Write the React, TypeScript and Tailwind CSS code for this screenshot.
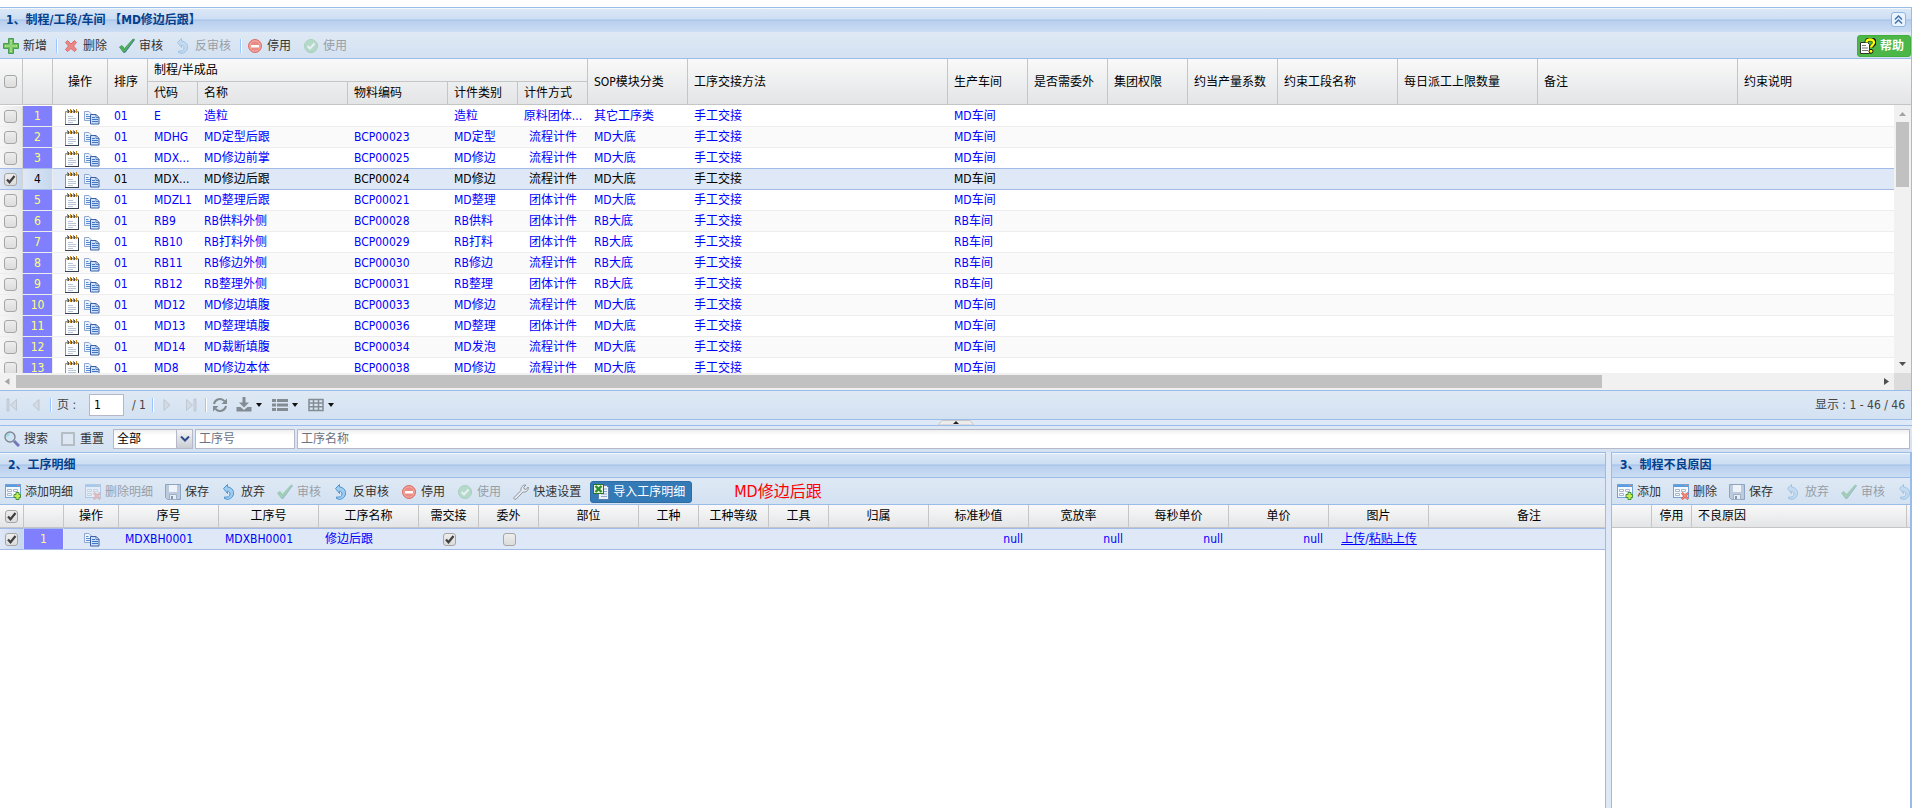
import type { ReactNode } from 'react'
import { clsx } from 'clsx'

type IconProps = { className?: string }

// ---- Icons ----

function Svg({ className, children }: { className?: string; children: ReactNode }) {
  return (
    <svg viewBox="0 0 16 16" className={clsx('w-4 h-4 shrink-0', className)} aria-hidden="true">
      {children}
    </svg>
  )
}

function PlusIcon() {
  return (
    <Svg>
      <path d="M5.5 0.5h5v5h5v5h-5v5h-5v-5h-5v-5h5z" fill="#6cbf5c" stroke="#4a9a58" />
      <path d="M8 2v12M2 8h12" stroke="#b9e58a" strokeWidth="2" />
      <path d="M8 3v10M3 8h10" stroke="#7cc96a" />
    </Svg>
  )
}

function CrossIcon() {
  return (
    <Svg>
      <path
        d="M2.5 4.5l2-2L8 6l3.500-3.500 2 2L10.500 8l3 3.500-2 2L8 10.500 4.500 13.500l-2-2L5.500 8z"
        fill="#ea8787"
        stroke="#dd6b6b"
      />
    </Svg>
  )
}

function CheckIcon() {
  return (
    <Svg>
      <path d="M0.500 9l2.500-1.500 2.500 3L14 1l1.500 0.500L6 14.500H4.500z" fill="#4cb05a" stroke="#3f9a55" strokeWidth="0.800" />
      <path d="M5 13.800h1.500L15.500 1.800" fill="none" stroke="#4d6fae" strokeWidth="0.800" />
    </Svg>
  )
}

function UndoIcon() {
  return (
    <Svg>
      <path
        d="M2.500 4.500L6.500 0.500v2.500c4 0.500 6.500 3 6 7-0.500 3-3 5-6 5.500l-3-1v-1.500c3.500 0.500 5.500-0.500 5.500-3 0-1.800-0.800-2.500-2.500-2.800v2.300z"
        fill="#9fcdf0"
        stroke="#4f94cf"
      />
    </Svg>
  )
}

function StopIcon() {
  return (
    <Svg>
      <circle cx="8" cy="8" r="6.500" fill="#ea8a83" stroke="#dd7169" />
      <circle cx="8" cy="8" r="5.200" fill="none" stroke="#f3aca6" />
      <rect x="4" y="7" width="8" height="2.500" fill="#fff" />
    </Svg>
  )
}

function EnableIcon() {
  return (
    <Svg>
      <circle cx="8" cy="8" r="6.500" fill="#7fc98a" stroke="#5fb16c" />
      <path d="M4.500 8l2.500 2.500 4.500-5" fill="none" stroke="#fff" strokeWidth="2" />
    </Svg>
  )
}

function FormIcon({ remove }: { remove?: boolean }) {
  return (
    <Svg>
      <rect x="0.500" y="0.500" width="15" height="13" fill="#f4f9ff" stroke="#6fa3d8" />
      <path d="M1 1h14v2H1z" fill="#5b9be0" />
      <path d="M12 1h2v1h-2z" fill="#f08070" />
      <path d="M2.500 5.500h4v2h-4zM2.500 9.500h4v2h-4zM8.500 5.500h4v2h-4z" fill="#fff" stroke="#a6b6ca" />
      {remove ? (
        <path d="M8.500 9.500l1-1 2.500 2 2.500-2 1 1-2 2.500 2 2.500-1 1-2.500-2-2.500 2-1-1 2-2.500z" fill="#f08d80" stroke="#d2523f" strokeWidth="0.800" />
      ) : (
        <path d="M11 8.500h3v2h1.500v3H14v2h-3v-2H9v-3h2z" fill="#c4ea50" stroke="#3f9340" />
      )}
    </Svg>
  )
}

function SaveIcon() {
  return (
    <Svg>
      <path d="M0.500 0.500h15v15h-13l-2-2z" fill="#bccadd" stroke="#8fa4c0" />
      <path d="M4 1h8v7H4z" fill="#eef3fa" />
      <path d="M4.500 10.500h7v5h-7z" fill="#e8edf4" stroke="#9fb0c6" />
      <path d="M6 12h2v3H6z" fill="#8296b3" />
    </Svg>
  )
}

function WrenchIcon() {
  return (
    <Svg>
      <path
        d="M1 13.500L8 6.500C7.500 3.500 9.500 0.800 13 1l-2.300 2.300 0.500 1.700 1.700 0.500L15.200 3c0.500 3.500-2 5.500-5.200 5L3 15.200c-1.300 0.600-2.600-0.500-2-1.700z"
        fill="#e8ebf0"
        stroke="#8d949e"
      />
    </Svg>
  )
}

function ExcelIcon() {
  return (
    <Svg>
      <path d="M5.500 1.500h8l2 2v12h-10z" fill="#e9f0fa" stroke="#5c7cab" />
      <path d="M11 5h3M11 7.500h3M8 10h6M8 12.500h6" stroke="#8aa6cf" />
      <rect x="0.500" y="0.500" width="10" height="9" fill="#e6f3e0" stroke="#2b7424" />
      <path d="M2.500 2l6 6M8.500 2l-6 6" stroke="#2f8a28" strokeWidth="2.400" />
    </Svg>
  )
}

function HelpIcon() {
  return (
    <Svg>
      <path d="M0.500 4.500h7l2 2v9h-9z" fill="#fff" stroke="#333" />
      <path d="M2 7.500h4M2 10h6M2 12.500h6" stroke="#777" />
      <path d="M6.500 4.500C6.500 0 14.500 0 14.500 4.500c0 2.500-3 2.500-3.300 5" fill="none" stroke="#111" strokeWidth="4" />
      <path d="M6.500 4.500C6.500 0.500 14 0.500 14 4.500c0 2.200-2.800 2.500-3 5" fill="none" stroke="#ff0" strokeWidth="2.400" />
      <circle cx="11" cy="13.300" r="2" fill="#ff0" stroke="#111" />
    </Svg>
  )
}

function NoteIcon() {
  return (
    <Svg>
      <path d="M1.500 2.500h13v13h-13z" fill="#fdfdfd" stroke="#8a929c" />
      <path d="M1 15.500h14M14.500 3v13" stroke="#36424f" />
      <path d="M2 3.500h12" stroke="#efe3c4" />
      <path d="M3.500 0v4M6.500 0v4M9.500 0v4M12.500 0v4" stroke="#c98a1c" />
      <path d="M4.500 1v3M7.500 1v3M10.500 1v3" stroke="#5b5140" />
      <path d="M4 7.500h5M4 9.500h8M4 11.500h8M4 13.500h5" stroke="#b9c6d6" />
    </Svg>
  )
}

function CopyIcon() {
  return (
    <Svg>
      <path d="M0.500 2.500h4.500l3 3v6h-7.500z" fill="#eef4fc" stroke="#90a8cf" />
      <path d="M2 5.500h2.500M2 7.500h4M2 9.500h4" stroke="#5d8bd0" />
      <path d="M6.500 5.500h5.500l3 3v6.500h-8.500z" fill="#cfe1f8" stroke="#3a61a8" />
      <path d="M8 8.500h3M8 10.500h6M8 12.500h6" stroke="#3f74c6" />
      <path d="M12 5.500v3h3z" fill="#fff" stroke="#3a61a8" strokeWidth="0.800" />
    </Svg>
  )
}

function SearchIcon() {
  return (
    <Svg>
      <path d="M10 10l5 5" stroke="#7476b8" strokeWidth="3" />
      <circle cx="6" cy="6" r="5" fill="#cfe3f2" stroke="#7f8791" strokeWidth="1.400" />
      <path d="M3.500 5.500c0-1.500 1-2.500 2.500-2.500" fill="none" stroke="#7fe0f0" strokeWidth="1.500" />
    </Svg>
  )
}

function PageFirstIcon({ className }: IconProps) {
  return (
    <Svg className={className}>
      <path d="M3 2h2v12H3zM12.500 2.500v11L6.500 8z" fill="#d3dae3" stroke="#b7c0cc" strokeWidth="0.800" />
    </Svg>
  )
}

function PagePrevIcon({ className }: IconProps) {
  return (
    <Svg className={className}>
      <path d="M11 2.500v11L5 8z" fill="#d3dae3" stroke="#b7c0cc" strokeWidth="0.800" />
    </Svg>
  )
}

function RefreshIcon() {
  return (
    <Svg>
      <path d="M2 7a6 6 0 0 1 10.500-2.800M14 9a6 6 0 0 1-10.500 2.800" fill="none" stroke="#848c93" strokeWidth="2" />
      <path d="M15 1.500v5.500H9.500zM1 14.500V9h5.500z" fill="#848c93" />
    </Svg>
  )
}

function DownloadIcon() {
  return (
    <Svg>
      <path d="M6.500 0h3v5.500H13L8 10.500 3 5.500h3.500z" fill="#848c93" />
      <path d="M0.500 10h4L8 13l3.500-3h4v4.500h-15z" fill="#848c93" />
    </Svg>
  )
}

function ListIcon() {
  return (
    <Svg>
      <path d="M0 2h4v3H0zM5 2h11v3H5zM0 6.500h4v3H0zM5 6.500h11v3H5zM0 11h4v3H0zM5 11h11v3H5z" fill="#848c93" />
    </Svg>
  )
}

function GridIcon() {
  return (
    <Svg>
      <path d="M1 2.500h14v11H1zM1 6h14M1 9.700h14M5.500 3v10.500M10.500 3v10.500" fill="none" stroke="#848c93" strokeWidth="1.500" />
    </Svg>
  )
}

// ---- Shared controls ----

function Checkbox({ label, checked }: { label: string; checked?: boolean }) {
  return (
    <span className="relative inline-block w-[13px] h-[13px] align-middle">
      <input
        type="checkbox"
        aria-label={label}
        defaultChecked={checked}
        className="peer block w-[13px] h-[13px] appearance-none rounded-[3px] border border-[#a6a6a6] bg-linear-to-b from-[#ededed] to-[#dcdcdc]"
      />
      <svg viewBox="0 0 13 13" className="absolute inset-0 hidden pointer-events-none peer-checked:block" aria-hidden="true">
        <path d="M3 6.500l2.500 2.800L10.500 3" fill="none" stroke="#404040" strokeWidth="2.200" />
      </svg>
    </span>
  )
}

function ToolButton({ icon, label, disabled }: { icon: ReactNode; label: string; disabled?: boolean }) {
  return (
    <button
      disabled={disabled}
      className="flex shrink-0 items-center gap-1 h-[22px] px-[3px] whitespace-nowrap text-[#333] disabled:opacity-40"
    >
      {icon}
      {label}
    </button>
  )
}

function Separator({ className }: IconProps) {
  return <div className={clsx('shrink-0 w-0.5 h-3.5 border-l border-l-[#98c8ff] border-r border-r-white', className)} />
}

function Caret() {
  return (
    <svg viewBox="0 0 6 4" className="w-1.5 h-1" aria-hidden="true">
      <path d="M0 0h6L3 4z" fill="#111" />
    </svg>
  )
}

const titleBar =
  'flex items-center justify-between h-6 px-1.5 pb-0.5 border-t border-t-[#f3f8fd] font-bold text-[#04408c] bg-[linear-gradient(#dae7f6,#cddef3_45%,#abc7ec_46%,#abc7ec_50%,#b8cfee_51%,#cbddf3)]'
const toolbar = 'flex items-center gap-1.5 pt-px bg-linear-to-b from-[#dfe9f5] to-[#d3e1f1]'
const headerBg = 'bg-linear-to-b from-[#f9f9f9] to-[#e3e4e6]'
const textInput =
  'h-5 px-[3px] border border-[#b5b8c8] bg-white bg-linear-to-b from-[#eeefee] to-white to-30% text-black placeholder:text-gray-500 outline-none'

// ---- Process grid ----

const processCols = [
  'w-[23px]',
  'w-[30px]',
  'w-[55px]',
  'w-[40px]',
  'w-[50px]',
  'w-[150px]',
  'w-[100px]',
  'w-[70px]',
  'w-[70px]',
  'w-[100px]',
  'w-[260px]',
  'w-[80px]',
  'w-[80px]',
  'w-[80px]',
  'w-[90px]',
  'w-[120px]',
  'w-[140px]',
  'w-[200px]',
  '',
]

// code, name, material no., piece type, piece mode, SOP category, workshop
const processRows = [
  ['E', '造粒', '', '造粒', '原料团体...', '其它工序类', 'MD车间'],
  ['MDHG', 'MD定型后跟', 'BCP00023', 'MD定型', '流程计件', 'MD大底', 'MD车间'],
  ['MDX...', 'MD修边前掌', 'BCP00025', 'MD修边', '流程计件', 'MD大底', 'MD车间'],
  ['MDX...', 'MD修边后跟', 'BCP00024', 'MD修边', '流程计件', 'MD大底', 'MD车间'],
  ['MDZL1', 'MD整理后跟', 'BCP00021', 'MD整理', '团体计件', 'MD大底', 'MD车间'],
  ['RB9', 'RB供料外侧', 'BCP00028', 'RB供料', '团体计件', 'RB大底', 'RB车间'],
  ['RB10', 'RB打料外侧', 'BCP00029', 'RB打料', '团体计件', 'RB大底', 'RB车间'],
  ['RB11', 'RB修边外侧', 'BCP00030', 'RB修边', '流程计件', 'RB大底', 'RB车间'],
  ['RB12', 'RB整理外侧', 'BCP00031', 'RB整理', '团体计件', 'RB大底', 'RB车间'],
  ['MD12', 'MD修边填腹', 'BCP00033', 'MD修边', '流程计件', 'MD大底', 'MD车间'],
  ['MD13', 'MD整理填腹', 'BCP00036', 'MD整理', '团体计件', 'MD大底', 'MD车间'],
  ['MD14', 'MD裁断填腹', 'BCP00034', 'MD发泡', '流程计件', 'MD大底', 'MD车间'],
  ['MD8', 'MD修边本体', 'BCP00038', 'MD修边', '流程计件', 'MD大底', 'MD车间'],
]
const selectedRow = 3

function ColGroup({ cols }: { cols: string[] }) {
  return (
    <colgroup>
      {cols.map((width, i) => (
        <col key={i} className={width} />
      ))}
    </colgroup>
  )
}

function ProcessHeader() {
  const th = 'px-1.5 border-r border-b border-[#c5c5c5] text-left font-normal whitespace-nowrap'
  return (
    <table className={clsx('w-full table-fixed border-separate border-spacing-0 text-black', headerBg)}>
      <ColGroup cols={processCols} />
      <thead>
        <tr className="h-[23px]">
          <th rowSpan={2} className="pl-1 border-r border-b border-[#c5c5c5] text-left leading-3">
            <Checkbox label="全选" />
          </th>
          <th rowSpan={2} className={th} />
          <th rowSpan={2} className="border-r border-b border-[#c5c5c5] text-center font-normal">操作</th>
          <th rowSpan={2} className={th}>排序</th>
          <th colSpan={5} className={th}>制程/半成品</th>
          {['SOP模块分类', '工序交接方法', '生产车间', '是否需委外', '集团权限', '约当产量系数', '约束工段名称', '每日派工上限数量', '备注'].map(
            label => (
              <th key={label} rowSpan={2} className={th}>
                {label}
              </th>
            )
          )}
          <th rowSpan={2} className="px-1.5 border-b border-[#c5c5c5] text-left font-normal">约束说明</th>
        </tr>
        <tr className="h-[23px]">
          {['代码', '名称', '物料编码', '计件类别', '计件方式'].map(label => (
            <th key={label} className={th}>
              {label}
            </th>
          ))}
        </tr>
      </thead>
    </table>
  )
}

function ProcessBody() {
  return (
    <table className="w-full table-fixed border-separate border-spacing-0">
      <ColGroup cols={processCols} />
      <tbody>
        {processRows.map(([code, name, material, type, mode, sop, workshop], i) => {
          const selected = i === selectedRow
          const line = selected || i === selectedRow - 1 ? 'border-b-[#a3bae9]' : 'border-b-[#ededed]'
          const td = clsx('h-[21px] px-1.5 border-b whitespace-nowrap', line)
          return (
            <tr
              key={name}
              className={clsx(
                selected ? 'bg-[#dfe8f6] text-black' : 'text-[#0000ff]',
                !selected && i % 2 === 1 && 'bg-[#fafafa]'
              )}
            >
              <td
                className={clsx(
                  'h-[21px] pl-1 border-b border-r border-r-[#d4d4d4] bg-linear-to-r leading-3',
                  line,
                  selected ? 'from-[#dfe8f6] to-[#c6d8ee]' : 'from-[#f6f6f6] to-[#e9e9e9]'
                )}
              >
                <Checkbox label={name} checked={selected} />
              </td>
              <td
                className={clsx(
                  'border-b border-r border-r-[#ededed] text-center',
                  line,
                  selected ? 'bg-linear-to-r from-[#dfe8f6] to-[#c6d8ee]' : 'bg-[#8080ff] bg-clip-padding text-[#ffff80]'
                )}
              >
                {i + 1}
              </td>
              <td className={clsx('pl-0.5 border-b', line)}>
                <div className="flex justify-center gap-1 pt-px">
                  <button aria-label="编辑">
                    <NoteIcon />
                  </button>
                  <button aria-label="复制">
                    <CopyIcon />
                  </button>
                </div>
              </td>
              <td className={td}>01</td>
              <td className={td}>{code}</td>
              <td className={td}>{name}</td>
              <td className={td}>{material}</td>
              <td className={td}>{type}</td>
              <td className={clsx('border-b text-center whitespace-nowrap', line)}>{mode}</td>
              <td className={td}>{sop}</td>
              <td className={td}>手工交接</td>
              <td className={td}>{workshop}</td>
              <td colSpan={7} className={td} />
            </tr>
          )
        })}
      </tbody>
    </table>
  )
}

function ProcessPanel() {
  return (
    <section className="border-t border-r border-b border-[#99bce8]">
      <header className={titleBar}>
        <h2>1、制程/工段/车间 【MD修边后跟】</h2>
        <button aria-label="收起" className="flex items-center justify-center w-[15px] h-[15px] -mr-px rounded-[3px] border border-[#8fb5e3] bg-[#eaf4fe]">
          <svg viewBox="0 0 9 9" className="w-[9px] h-[9px]" aria-hidden="true">
            <path d="M1 4.500L4.500 1 8 4.500M1 8.500L4.500 5 8 8.500" fill="none" stroke="#3d74b0" strokeWidth="1.500" />
          </svg>
        </button>
      </header>
      <div className={clsx(toolbar, 'h-[27px] border-b border-[#99bce8]')}>
        <ToolButton icon={<PlusIcon />} label="新增" />
        <Separator className="-mr-1" />
        <ToolButton icon={<CrossIcon />} label="删除" />
        <ToolButton icon={<CheckIcon />} label="审核" />
        <ToolButton icon={<UndoIcon />} label="反审核" disabled />
        <Separator className="-mr-1" />
        <ToolButton icon={<StopIcon />} label="停用" />
        <ToolButton icon={<EnableIcon />} label="使用" disabled />
        <button className="flex items-center gap-1 h-[22px] ml-auto pl-0.5 pr-1.5 rounded-[3px] border border-[#3fae3b] bg-[#4cb748] font-bold text-white">
          <HelpIcon />
          帮助
        </button>
      </div>
      <ProcessHeader />
      <div className="flex h-[268px]">
        <div className="flex-1 min-w-0 pt-px overflow-hidden bg-white">
          <ProcessBody />
        </div>
        <div className="flex flex-col items-center w-[17px] bg-[#f1f1f1]">
          <svg viewBox="0 0 17 17" className="w-[17px] h-[17px] shrink-0" aria-hidden="true">
            <path d="M5 11h7L8.500 7z" fill="#a3a3a3" />
          </svg>
          <div className="w-[13px] h-[65px] bg-[#c1c1c1]" />
          <svg viewBox="0 0 17 17" className="w-[17px] h-[17px] shrink-0 mt-auto" aria-hidden="true">
            <path d="M5 6h7l-3.500 4z" fill="#505050" />
          </svg>
        </div>
      </div>
      <div className="flex items-center h-[17px] bg-[#f1f1f1]">
        <svg viewBox="0 0 17 17" className="w-4 h-[17px] shrink-0" aria-hidden="true">
          <path d="M10 5v7L5 8.500z" fill="#a3a3a3" />
        </svg>
        <div className="flex-1">
          <div className="w-[85.2%] h-[13px] bg-[#c1c1c1]" />
        </div>
        <svg viewBox="0 0 17 17" className="w-[17px] h-[17px] shrink-0" aria-hidden="true">
          <path d="M7 5v7l5-3.500z" fill="#505050" />
        </svg>
        <div className="w-[17px] h-[17px] bg-[#dcdcdc]" />
      </div>
      <PagingBar />
    </section>
  )
}

function PagingBar() {
  const separator = 'ml-1.5 mr-[5px]'
  return (
    <div className="flex items-center h-[29px] border-t border-[#99bce8] bg-linear-to-b from-[#dfe9f5] to-[#d3e1f1] text-[#444]">
      <div className="flex items-center gap-2 pl-1">
        <button aria-label="首页" disabled>
          <PageFirstIcon />
        </button>
        <button aria-label="上一页" disabled>
          <PagePrevIcon />
        </button>
      </div>
      <Separator className={separator} />
      <label htmlFor="page" className="w-8">页 :</label>
      <input
        id="page"
        defaultValue="1"
        className="w-[35px] h-[22px] px-1 border border-[#b5b8c8] bg-white text-xs text-black outline-none"
      />
      <span className="pl-2">/ 1</span>
      <Separator className={separator} />
      <div className="flex items-center gap-2">
        <button aria-label="下一页" disabled>
          <PagePrevIcon className="rotate-180" />
        </button>
        <button aria-label="末页" disabled>
          <PageFirstIcon className="rotate-180" />
        </button>
      </div>
      <Separator className={separator} />
      <button aria-label="刷新">
        <RefreshIcon />
      </button>
      <div className="flex items-center gap-2.5 pl-2">
        <button aria-label="导出" className="flex items-center gap-1">
          <DownloadIcon />
          <Caret />
        </button>
        <button aria-label="列表" className="flex items-center gap-1">
          <ListIcon />
          <Caret />
        </button>
        <button aria-label="表格" className="flex items-center gap-1">
          <GridIcon />
          <Caret />
        </button>
      </div>
      <span className="ml-auto pr-1.5">显示 : 1 - 46 / 46</span>
    </div>
  )
}

function SearchBar() {
  return (
    <div className="flex items-center h-[26px] pl-1 pr-0.5 bg-linear-to-b from-[#dfe9f5] to-[#d3e1f1] text-[#333]">
      <button className="flex items-center gap-1">
        <SearchIcon />
        搜索
      </button>
      <button className="flex items-center gap-[5px] ml-[13px]">
        <span className="w-3.5 h-3.5 border-2 border-[#b4bcc4] bg-[#dce7f3]" />
        重置
      </button>
      <div className="relative w-20 ml-[9px]">
        <select aria-label="状态" className={clsx(textInput, 'block w-full appearance-none')}>
          <option>全部</option>
        </select>
        <span className="absolute top-0 right-0 flex items-center justify-center w-[17px] h-5 border border-[#b5b8c8] bg-linear-to-b from-[#f4f4f4] to-[#c9cdd3] pointer-events-none">
          <svg viewBox="0 0 10 6" className="w-2.5 h-1.5" aria-hidden="true">
            <path d="M1 0.500l4 4 4-4" fill="none" stroke="#2d4a8a" strokeWidth="2" />
          </svg>
        </span>
      </div>
      <input aria-label="工序号" placeholder="工序号" className={clsx(textInput, 'w-[100px] ml-0.5')} />
      <input aria-label="工序名称" placeholder="工序名称" className={clsx(textInput, 'flex-1 min-w-0 ml-0.5')} />
    </div>
  )
}

// ---- Step detail grid ----

const detailCols = [
  { label: '序号', width: 'w-[100px]' },
  { label: '工序号', width: 'w-[100px]' },
  { label: '工序名称', width: 'w-[100px]' },
  { label: '需交接', width: 'w-[60px]' },
  { label: '委外', width: 'w-[60px]' },
  { label: '部位', width: 'w-[100px]' },
  { label: '工种', width: 'w-[60px]' },
  { label: '工种等级', width: 'w-[70px]' },
  { label: '工具', width: 'w-[60px]' },
  { label: '归属', width: 'w-[100px]' },
  { label: '标准秒值', width: 'w-[100px]' },
  { label: '宽放率', width: 'w-[100px]' },
  { label: '每秒单价', width: 'w-[100px]' },
  { label: '单价', width: 'w-[100px]' },
  { label: '图片', width: 'w-[100px]' },
]

function DetailGrid() {
  const th = 'h-[23px] border-r border-b border-[#c5c5c5] text-center font-normal whitespace-nowrap'
  const td = 'h-[22px] px-1.5 border-t border-b border-[#a3bae9] whitespace-nowrap'
  return (
    <table className="w-full table-fixed border-separate border-spacing-0">
      <ColGroup cols={['w-[24px]', 'w-[40px]', 'w-[55px]', ...detailCols.map(c => c.width), '']} />
      <thead className={clsx('text-black', headerBg)}>
        <tr>
          <th className={clsx(th, 'leading-3')}>
            <Checkbox label="全选" checked />
          </th>
          <th className={th} />
          <th className={th}>操作</th>
          {detailCols.map(col => (
            <th key={col.label} className={th}>
              {col.label}
            </th>
          ))}
          <th className="pl-6 border-b border-[#c5c5c5] text-center font-normal">备注</th>
        </tr>
      </thead>
      <tbody>
        <tr className="bg-[#dfe8f6] text-[#0000ff]">
          <td className="border-t border-b border-r border-[#a3bae9] border-r-[#d4dbe8] bg-linear-to-r from-[#dfe8f6] to-[#c6d8ee] text-center leading-3">
            <Checkbox label="修边后跟" checked />
          </td>
          <td className="border-t border-b border-r border-[#a3bae9] border-r-[#ededed] bg-[#8080ff] text-center text-[#ffff80]">1</td>
          <td className={td}>
            <button aria-label="复制" className="block mx-auto">
              <CopyIcon />
            </button>
          </td>
          <td className={td}>MDXBH0001</td>
          <td className={td}>MDXBH0001</td>
          <td className={td}>修边后跟</td>
          <td className={clsx(td, 'text-center leading-3')}>
            <Checkbox label="需交接" checked />
          </td>
          <td className={clsx(td, 'text-center leading-3')}>
            <Checkbox label="委外" />
          </td>
          <td className={td} />
          <td className={td} />
          <td className={td} />
          <td className={td} />
          <td className={td} />
          <td className={clsx(td, 'text-right')}>null</td>
          <td className={clsx(td, 'text-right')}>null</td>
          <td className={clsx(td, 'text-right')}>null</td>
          <td className={clsx(td, 'text-right')}>null</td>
          <td className={clsx(td, 'text-center')}>
            <a href="#upload" className="underline">上传</a>/<a href="#paste" className="underline">粘贴上传</a>
          </td>
          <td className={td} />
        </tr>
      </tbody>
    </table>
  )
}

function DetailPanel() {
  return (
    <section className="flex-1 min-w-0 border-t border-r border-[#99bce8] bg-white">
      <header className={clsx(titleBar, 'pl-2')}>
        <h2>2、工序明细</h2>
      </header>
      <div className={clsx(toolbar, 'h-7 pl-0.5 border-t border-b border-[#99bce8]')}>
        <ToolButton icon={<FormIcon />} label="添加明细" />
        <ToolButton icon={<FormIcon remove />} label="删除明细" disabled />
        <ToolButton icon={<SaveIcon />} label="保存" />
        <ToolButton icon={<UndoIcon />} label="放弃" />
        <ToolButton icon={<CheckIcon />} label="审核" disabled />
        <ToolButton icon={<UndoIcon />} label="反审核" />
        <ToolButton icon={<StopIcon />} label="停用" />
        <ToolButton icon={<EnableIcon />} label="使用" disabled />
        <ToolButton icon={<WrenchIcon />} label="快速设置" />
        <button className="flex shrink-0 items-center gap-1 h-[22px] pl-0.5 pr-1.5 rounded-[3px] border border-[#2e6da4] bg-[#337ab7] text-white">
          <ExcelIcon />
          导入工序明细
        </button>
        <span className="pl-9 text-base leading-5 text-[#ff0000] whitespace-nowrap">MD修边后跟</span>
      </div>
      <DetailGrid />
    </section>
  )
}

function ReasonPanel() {
  const th = 'h-[23px] border-r border-b border-[#c5c5c5] font-normal'
  return (
    <section className="w-[301px] border-t border-l border-r-2 border-[#99bce8] bg-white overflow-hidden">
      <header className={clsx(titleBar, 'pl-2')}>
        <h2>3、制程不良原因</h2>
      </header>
      <div className={clsx(toolbar, 'h-7 pl-0.5 border-t border-b border-[#99bce8] overflow-hidden')}>
        <ToolButton icon={<FormIcon />} label="添加" />
        <ToolButton icon={<FormIcon remove />} label="删除" />
        <ToolButton icon={<SaveIcon />} label="保存" />
        <ToolButton icon={<UndoIcon />} label="放弃" disabled />
        <ToolButton icon={<CheckIcon />} label="审核" disabled />
        <ToolButton icon={<UndoIcon />} label="" disabled />
      </div>
      <table className="w-full table-fixed border-separate border-spacing-0">
        <ColGroup cols={['w-[40px]', 'w-[40px]', '', 'w-[3px]']} />
        <thead className={clsx('text-black', headerBg)}>
          <tr>
            <th className={th} />
            <th className={th}>停用</th>
            <th className={clsx(th, 'px-1.5 text-left')}>不良原因</th>
            <th className="border-b border-[#c5c5c5]" />
          </tr>
        </thead>
      </table>
    </section>
  )
}

export default function App() {
  return (
    <div className="flex flex-col min-h-screen pt-[7px] overflow-hidden bg-white text-xs leading-4 font-['DejaVu_Sans_Condensed','Noto_Sans_CJK_SC',sans-serif]">
      <ProcessPanel />
      {/* Splitter with its collapse handle */}
      <div className="flex justify-center h-[5px] bg-[#dfe8f6]">
        <svg viewBox="0 0 36 5" className="w-9 h-[5px]" aria-hidden="true">
          <path d="M0 5L4 0.500h28L36 5z" fill="#ececec" stroke="#c8c8c8" />
          <path d="M15 4h6l-3-3z" fill="#222" />
        </svg>
      </div>
      <div className="flex flex-col flex-1 border-t border-[#99bce8]">
        <SearchBar />
        <div className="flex flex-1 gap-[5px] bg-[#dfe8f6]">
          <DetailPanel />
          <ReasonPanel />
        </div>
      </div>
    </div>
  )
}
